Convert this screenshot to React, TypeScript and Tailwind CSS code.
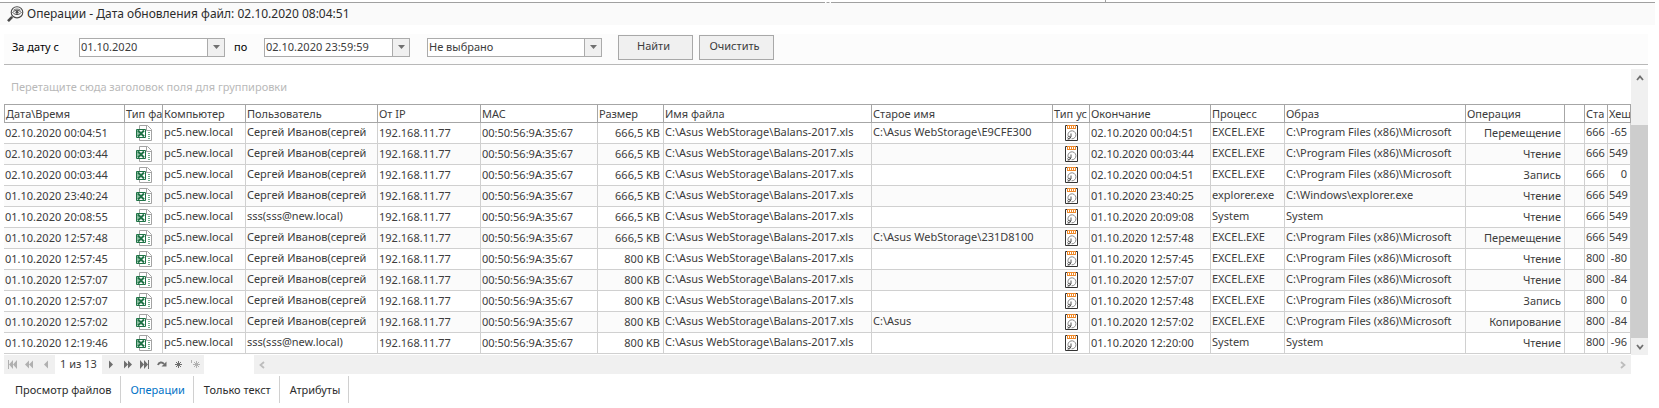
import type { ReactNode } from 'react'
import clsx from 'clsx'

const columns = [
  { title: 'Дата\\Время', width: 'w-[121px]' },
  { title: 'Тип фа', width: 'w-[38px]' },
  { title: 'Компьютер', width: 'w-[83px]' },
  { title: 'Пользователь', width: 'w-[132px]' },
  { title: 'От IP', width: 'w-[103px]' },
  { title: 'MAC', width: 'w-[117px]' },
  { title: 'Размер', width: 'w-[66px]' },
  { title: 'Имя файла', width: '' },
  { title: 'Старое имя', width: 'w-[181px]' },
  { title: 'Тип ус', width: 'w-[37px]' },
  { title: 'Окончание', width: 'w-[121px]' },
  { title: 'Процесс', width: 'w-[74px]' },
  { title: 'Образ', width: 'w-[181px]' },
  { title: 'Операция', width: 'w-[99px]' },
  { title: '', width: 'w-[20px]' },
  { title: 'Ста', width: 'w-[23px]' },
  { title: 'Хеш', width: 'w-[23px]' },
]

const sergey = 'Сергей Иванов(сергей'
const sss = 'sss(sss@new.local)'
const office = 'C:\\Program Files (x86)\\Microsoft'

// start, user, size, old name, end, process, image, operation, status, hash
const rows = [
  ['02.10.2020 00:04:51', sergey, '666,5 KB', 'C:\\Asus WebStorage\\E9CFE300', '02.10.2020 00:04:51', 'EXCEL.EXE', office, 'Перемещение', '666', '-65'],
  ['02.10.2020 00:03:44', sergey, '666,5 KB', '', '02.10.2020 00:03:44', 'EXCEL.EXE', office, 'Чтение', '666', '549'],
  ['02.10.2020 00:03:44', sergey, '666,5 KB', '', '02.10.2020 00:04:51', 'EXCEL.EXE', office, 'Запись', '666', '0'],
  ['01.10.2020 23:40:24', sergey, '666,5 KB', '', '01.10.2020 23:40:25', 'explorer.exe', 'C:\\Windows\\explorer.exe', 'Чтение', '666', '549'],
  ['01.10.2020 20:08:55', sss, '666,5 KB', '', '01.10.2020 20:09:08', 'System', 'System', 'Чтение', '666', '549'],
  ['01.10.2020 12:57:48', sergey, '666,5 KB', 'C:\\Asus WebStorage\\231D8100', '01.10.2020 12:57:48', 'EXCEL.EXE', office, 'Перемещение', '666', '549'],
  ['01.10.2020 12:57:45', sergey, '800 KB', '', '01.10.2020 12:57:45', 'EXCEL.EXE', office, 'Чтение', '800', '-80'],
  ['01.10.2020 12:57:07', sergey, '800 KB', '', '01.10.2020 12:57:07', 'EXCEL.EXE', office, 'Чтение', '800', '-84'],
  ['01.10.2020 12:57:07', sergey, '800 KB', '', '01.10.2020 12:57:48', 'EXCEL.EXE', office, 'Запись', '800', '0'],
  ['01.10.2020 12:57:02', sergey, '800 KB', 'C:\\Asus', '01.10.2020 12:57:02', 'EXCEL.EXE', office, 'Копирование', '800', '-84'],
  ['01.10.2020 12:19:46', sss, '800 KB', '', '01.10.2020 12:20:00', 'System', 'System', 'Чтение', '800', '-96'],
]

const tabs = ['Просмотр файлов', 'Операции', 'Только текст', 'Атрибуты']

function SearchEyeIcon() {
  return (
    <svg width="17" height="17" viewBox="0 0 17 17" fill="none" stroke="#4a4a4a">
      <path d="M5.2 10.8 1 15.2" strokeWidth="2.6" />
      <ellipse cx="10" cy="6.3" rx="5.8" ry="5.6" strokeWidth="1.1" />
      <path d="M5.8 6.5c2-3 6.4-3 8.4 0-2 2.7-6.4 2.7-8.4 0Z" strokeWidth="1" />
      <path d="M6.5 4.2c2-1.6 5-1.6 7 0" strokeWidth=".8" />
      <circle cx="10" cy="6.3" r="1.5" fill="#4a4a4a" stroke="none" />
    </svg>
  )
}

function ExcelIcon() {
  return (
    <svg className="mx-auto block" width="16" height="16" viewBox="0 0 16 16" fill="none">
      <path d="M3.5 4V.5h8l4 4v11h-12V13" fill="#fff" stroke="#a3a3a3" />
      <path d="M10.5.5v5h5" stroke="#a3a3a3" />
      <path d="M12 7.5h2M12 9.5h2M12 11.5h2M12 13.500h2" stroke="#6fae8a" />
      <path d="M.5 4.5h9v8h-9z" fill="#fff" stroke="#1f7346" />
      <path d="M1 5h1.500l1 1-1 5.500H1z" fill="#8fbfa3" />
      <path d="m2 5.500 6 6M8 5.500l-6 6" stroke="#1f7346" strokeWidth="2" />
    </svg>
  )
}

function DiskIcon() {
  return (
    <svg className="mx-auto block" width="13" height="16" viewBox="0 0 13 16" fill="none">
      <path d="M.5.5h12v15H.5z" fill="#fff" stroke="#333" />
      <path d="M2 0h9v4H2z" fill="#ee8a2c" />
      <path d="M3.5 1v2M5.5 1v2M7.5 1v2M9.5 1v2" stroke="#fff" />
      <path d="M3.3 11.5a4 4 0 1 1 3.2 2.3" stroke="#8a8a8a" />
      <path d="M6 8.5v3.500L3 14M2.500 12.5c1-1.500 3-1.500 3 0s-2 1.500-3 1.500" stroke="#444" strokeWidth=".9" />
    </svg>
  )
}

function Caret() {
  return (
    <svg width="7" height="4" viewBox="0 0 7 4" fill="#707070">
      <path d="M0 0h7L3.5 4z" />
    </svg>
  )
}

function Chevron({ d, stroke }: { d: string; stroke: string }) {
  return (
    <svg width="8" height="8" viewBox="0 0 8 8" fill="none" stroke={stroke} strokeWidth="1.8">
      <path d={d} />
    </svg>
  )
}

function DateBox({ id, value }: { id: string; value: string }) {
  return (
    <div className="flex h-[19px] w-[146px] border border-[#ababab] bg-white">
      <input id={id} defaultValue={value} className="min-w-0 flex-1 pl-px text-[11px] leading-4 outline-none" />
      <button
        type="button"
        aria-label="Открыть календарь"
        className="flex w-[17px] items-center justify-center border-l border-[#ababab] bg-[#f0f0f0]"
      >
        <Caret />
      </button>
    </div>
  )
}

function NavButton({ label, disabled, children }: { label: string; disabled?: boolean; children: ReactNode }) {
  return (
    <button
      type="button"
      aria-label={label}
      disabled={disabled}
      className={clsx(
        'flex w-[17px] items-center justify-center bg-[#f0f0f0]',
        disabled ? 'text-[#b0b0b0]' : 'text-[#6e6e6e]',
      )}
    >
      <svg width="11" height="9" viewBox="0 0 11 9" fill="currentColor">
        {children}
      </svg>
    </button>
  )
}

function Cell({ children, high, right }: { children?: ReactNode; high?: boolean; right?: boolean }) {
  return (
    <td
      className={clsx(
        'h-[21px] overflow-hidden border-r border-b border-[#d0d0d0] px-0 pl-px leading-4 whitespace-nowrap',
        high && 'pb-0.5',
        right && 'pr-[3px] text-right',
      )}
    >
      {children}
    </td>
  )
}

export default function App() {
  return (
    <div className="bg-white font-['Noto_Sans','Liberation_Sans',sans-serif] text-[11px] text-[#3c3c3c]">
      <div className="flex h-[2px]">
        <div className="w-2/3 border-r border-[#a0a0a0]" />
      </div>
      {/* top edge with the splitter grip in its middle */}
      <div className="mr-1 flex h-px">
        <div className="flex-1 bg-[#a0a0a0]" />
        <div className="w-3 border-t border-dashed border-[#a0a0a0]" />
        <div className="flex-1 bg-[#a0a0a0]" />
      </div>
      <header className="mr-1 flex h-[22px] items-center gap-[3px] bg-[#fafafa] pl-[7px]">
        <SearchEyeIcon />
        <h1 className="text-xs text-[#2c2c2c]">Операции - Дата обновления файл: 02.10.2020 08:04:51</h1>
      </header>

      <form
        className="mt-[9px] mr-[11px] ml-1 flex h-[31px] items-center border-b border-[#b8b8b8] bg-[#fcfcfc] pb-1 pl-2"
        onSubmit={(e) => e.preventDefault()}
      >
        <label htmlFor="date-from" className="w-[67px] text-black">За дату с</label>
        <DateBox id="date-from" value="01.10.2020" />
        <label htmlFor="date-to" className="w-[39px] pl-[9px] text-black">по</label>
        <DateBox id="date-to" value="02.10.2020 23:59:59" />
        <div className="relative ml-[17px] h-[19px] w-[175px]">
          <select
            aria-label="Операция"
            className="block size-full appearance-none border border-[#ababab] bg-white pl-px leading-4 outline-none"
          >
            <option>Не выбрано</option>
          </select>
          <span className="pointer-events-none absolute inset-y-0 right-0 flex w-[18px] items-center justify-center border border-[#ababab] bg-[#f0f0f0]">
            <Caret />
          </span>
        </div>
        <button type="submit" className="ml-4 h-[25px] w-[75px] border border-[#a8a8a8] bg-[#f0f0f0] pr-1 pb-px">
          Найти
        </button>
        <button type="reset" className="ml-1.5 h-[25px] w-[75px] border border-[#a8a8a8] bg-[#f0f0f0] pr-1 pb-px">
          Очистить
        </button>
      </form>

      <div className="mt-1 mr-[11px] ml-1 flex">
        <div className="min-w-0 flex-1 pb-px">
          <p className="flex h-[35px] items-center pt-0.5 pl-[7px] text-[#b9b9b9]">
            Перетащите сюда заголовок поля для группировки
          </p>
          <table className="w-full table-fixed border-separate border-spacing-0">
            <thead>
              <tr>
                {columns.map((c, i) => (
                  <th
                    key={i}
                    scope="col"
                    className={clsx(
                      'h-[19px] overflow-hidden border-y border-r border-[#a6a6a6] px-0 pl-px text-left leading-4 font-normal whitespace-nowrap first:border-l',
                      c.width,
                    )}
                  >
                    {c.title}
                  </th>
                ))}
              </tr>
            </thead>
            <tbody>
              {rows.map((r, i) => (
                <tr key={i} className="even:bg-[#fbfbfb]">
                  <Cell>{r[0]}</Cell>
                  <Cell><ExcelIcon /></Cell>
                  <Cell high>pc5.new.local</Cell>
                  <Cell high>{r[1]}</Cell>
                  <Cell>192.168.11.77</Cell>
                  <Cell>00:50:56:9A:35:67</Cell>
                  <Cell right>{r[2]}</Cell>
                  <Cell high>C:\Asus WebStorage\Balans-2017.xls</Cell>
                  <Cell high>{r[3]}</Cell>
                  <Cell><DiskIcon /></Cell>
                  <Cell>{r[4]}</Cell>
                  <Cell high>{r[5]}</Cell>
                  <Cell high>{r[6]}</Cell>
                  <Cell right>{r[7]}</Cell>
                  <Cell />
                  <Cell high right>{r[8]}</Cell>
                  <Cell high right>{r[9]}</Cell>
                </tr>
              ))}
            </tbody>
          </table>
        </div>

        <div className="flex w-[17px] flex-col bg-[#f0f0f0]">
          <button type="button" aria-label="Вверх" className="flex h-[17px] items-center justify-center">
            <Chevron d="M1 6l3-3.5L7 6" stroke="#707070" />
          </button>
          <div className="mt-[39px] flex-1 bg-[#cdcdcd]" />
          <button type="button" aria-label="Вниз" className="flex h-[17px] items-center justify-center">
            <Chevron d="M1 2l3 3.5L7 2" stroke="#707070" />
          </button>
        </div>
      </div>

      <div className="mr-[28px] ml-1 flex h-[19px]">
        <NavButton label="Первая" disabled>
          <path d="M1 0h1v9H1zM6 0v9L2 4.5zM10 0v9L6 4.5z" />
        </NavButton>
        <NavButton label="Предыдущая страница" disabled>
          <path d="M5 .5v8l-4-4zM9 .5v8l-4-4z" />
        </NavButton>
        <NavButton label="Предыдущая" disabled>
          <path d="M7 .5v8l-4-4z" />
        </NavButton>
        <span className="flex w-[47px] items-center justify-center">1 из 13</span>
        <NavButton label="Следующая">
          <path d="M4 .5v8l4-4z" />
        </NavButton>
        <NavButton label="Следующая страница">
          <path d="M2 .5v8l4-4zM6 .5v8l4-4z" />
        </NavButton>
        <NavButton label="Последняя">
          <path d="M1 0v9l4-4.5zM5 0v9l4-4.5zM9 0h1v9H9z" />
        </NavButton>
        <NavButton label="Повторить">
          <path d="M2 5c1-3 4-3.5 6-1" fill="none" stroke="currentColor" strokeWidth="2" />
          <path d="M5.5 6.5h5v-5z" />
        </NavButton>
        <NavButton label="Добавить">
          <path d="M5.5 1v7M2 4.5h7M3 2l5 5M8 2 3 7" stroke="currentColor" />
        </NavButton>
        <NavButton label="Добавить в конец" disabled>
          <path d="M6.5 1v7M3 4.5h7M4 2l5 5M9 2 4 7M1.5 0v3" stroke="currentColor" />
        </NavButton>
        <div className="ml-[50px] flex flex-1 items-center justify-between bg-[#f0f0f0] px-1">
          <button type="button" aria-label="Влево">
            <Chevron d="M6 1L2.5 4 6 7" stroke="#bdbdbd" />
          </button>
          <button type="button" aria-label="Вправо">
            <Chevron d="M2 1l3.5 3L2 7" stroke="#bdbdbd" />
          </button>
        </div>
      </div>

      <nav className="mt-[2px] ml-1 flex h-[27px]">
        {tabs.map((t) => (
          <button
            key={t}
            type="button"
            className={clsx(
              'border-r border-[#d0d0d0] pt-0.5 pr-2 pl-[10px] first:pl-[11px]',
              t === 'Операции' ? 'text-[#0072c6]' : 'text-[#2c2c2c]',
            )}
          >
            {t}
          </button>
        ))}
      </nav>
    </div>
  )
}
